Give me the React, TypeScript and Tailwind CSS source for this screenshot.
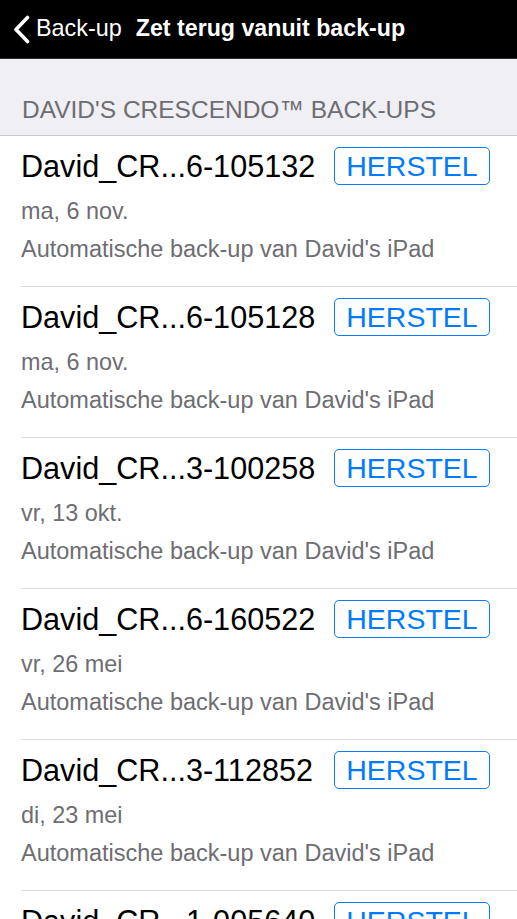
import React from "react";

const rows = [
  { name: "David_CR...6-105132", date: "ma, 6 nov." },
  { name: "David_CR...6-105128", date: "ma, 6 nov." },
  { name: "David_CR...3-100258", date: "vr, 13 okt." },
  { name: "David_CR...6-160522", date: "vr, 26 mei" },
  { name: "David_CR...3-112852", date: "di, 23 mei" },
  { name: "David_CR...1-005640", date: "di, 23 mei" },
];

export default function App() {
  return (
    <div
      className="w-[517px] h-[919px] overflow-hidden bg-white"
      style={{ fontFamily: '"Liberation Sans", Arial, sans-serif' }}
    >
      <header className="h-[59px] bg-black border-b border-[#2c2c2e] flex items-center text-white">
        <div className="flex items-center pl-[12px]">
          <svg width="19" height="29" viewBox="0 0 19 29" className="mr-[5px]">
            <path d="M15.5 2.5 L4 14.5 L15.5 26.5" fill="none" stroke="white" strokeWidth="3.6" strokeLinecap="round" strokeLinejoin="round" />
          </svg>
          <span className="text-[23.4px] leading-none">Back-up</span>
        </div>
        <span className="ml-[14px] text-[23.2px] font-bold leading-none">Zet terug vanuit back-up</span>
      </header>
      <div className="h-[77px] bg-[#efeff4] border-b border-[#c8c7cc] flex items-end pl-[22px] pb-[13px]">
        <span className="text-[24.5px] leading-none text-[#6d6d72]">DAVID'S CRESCENDO™ BACK-UPS</span>
      </div>
      <div className="flex flex-col">
        {rows.map((r, i) => (
          <div key={i} className="pl-[21px]">
            <div className="border-b border-[#dcdcdf] flex flex-col">
              <div className="mt-[11px] h-[38px] flex items-center">
                <span className="w-[313px] text-[30.6px] leading-none text-black whitespace-nowrap">{r.name}</span>
                <div className="w-[156px] h-[38px] border border-[#0a7cff] rounded-[5px] flex items-center justify-center text-[28.5px] leading-none text-[#007aff]">
                  HERSTEL
                </div>
              </div>
              <div className="mt-[11px] leading-[30px] text-[23.4px] text-[#6d6d72]">{r.date}</div>
              <div className="mt-[8px] mb-[22px] leading-[30px] text-[23.5px] text-[#6d6d72] whitespace-nowrap">
                Automatische back-up van David's iPad
              </div>
            </div>
          </div>
        ))}
      </div>
    </div>
  );
}
